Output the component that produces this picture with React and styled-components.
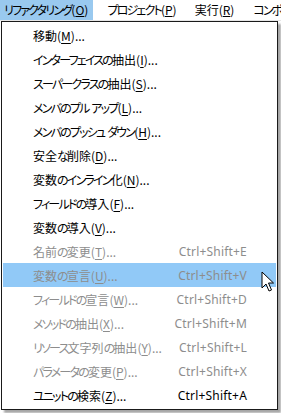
import React from "react";
import styled, { createGlobalStyle } from "styled-components";

const Global = createGlobalStyle`
  html, body { margin: 0; padding: 0; }
  body {
    width: 281px; height: 413px; overflow: hidden;
    background: #ffffff;
    font-family: "Noto Sans CJK JP", "Noto Sans", sans-serif;
  }
`;

const Screen = styled.div`
  position: relative;
  width: 281px;
  height: 413px;
  overflow: hidden;
  background: #ffffff;
`;

const MenuBar = styled.div`
  display: flex;
  height: 20px;
  overflow: hidden;
  background: #ffffff;
  font-size: 12px;
  line-height: 20px;
  color: #000;
  font-feature-settings: "palt";
`;

const BarItem = styled.div`
  flex: none;
  padding: 0 5px 0 4px;
  margin-right: ${(p) => p.$gap || 0}px;
  background: ${(p) => (p.$active ? "#99c9ef" : "transparent")};
  white-space: nowrap;
  height: 20px;
`;

const Content = styled.div`
  height: 392px;
  background: #ffffff;
  border-top: 1px solid #e6e6e6;
`;

const Menu = styled.div`
  position: absolute;
  left: 1px;
  top: 21px;
  width: 275px;
  padding: 1px 0 2px 0;
  background: #ffffff;
  border: 1px solid #1a1a1a;
  box-shadow: 3px 3px 2px rgba(0, 0, 0, 0.35);
  display: flex;
  flex-direction: column;
`;

const Row = styled.div`
  display: flex;
  align-items: center;
  justify-content: space-between;
  height: 24px;
  margin: 0 1px;
  padding: 0 29px 0 30px;
  background: ${(p) => (p.$hover ? "#91c9f7" : "transparent")};
  color: ${(p) => (p.$disabled ? "#8d8d8d" : "#000000")};
  font-size: 12px;
  white-space: nowrap;
`;

const Label = styled.span`
  font-family: "Noto Sans CJK JP", "Noto Sans", sans-serif;
  font-feature-settings: "palt";
  u { text-underline-offset: 2px; }
`;

const Kana = styled.span`
  letter-spacing: -1.8px;
`;

const Shortcut = styled.span`
  font-family: "Noto Sans", "Open Sans", sans-serif;
  font-size: 12px;
  letter-spacing: 0.2px;
`;

const Cursor = styled.svg`
  position: absolute;
  left: 261px;
  top: 271px;
`;

const kanaRe = /([\u30A0-\u30FF\u3040-\u309F]+)/;

function Jp({ text }) {
  return text
    .split(kanaRe)
    .filter(Boolean)
    .map((part, i) =>
      kanaRe.test(part) ? <Kana key={i}>{part}</Kana> : <React.Fragment key={i}>{part}</React.Fragment>
    );
}

const items = [
  ["移動", "M", "..."],
  ["インターフェイスの抽出", "I", "..."],
  ["スーパークラスの抽出", "S", "..."],
  ["メンバのプル アップ", "L", "..."],
  ["メンバのプッシュ ダウン", "H", "..."],
  ["安全な削除", "D", "..."],
  ["変数のインライン化", "N", "..."],
  ["フィールドの導入", "F", "..."],
  ["変数の導入", "V", "..."],
  ["名前の変更", "T", "...", "Ctrl+Shift+E", true],
  ["変数の宣言", "U", "...", "Ctrl+Shift+V", true, true],
  ["フィールドの宣言", "W", "...", "Ctrl+Shift+D", true],
  ["メソッドの抽出", "X", "...", "Ctrl+Shift+M", true],
  ["リソース文字列の抽出", "Y", "...", "Ctrl+Shift+L", true],
  ["パラメータの変更", "P", "...", "Ctrl+Shift+X", true],
  ["ユニットの検索", "Z", "...", "Ctrl+Shift+A"],
];

const bar = [
  ["リファクタリング", "O", 10, true],
  ["プロジェクト", "P", 9],
  ["実行", "R", 10],
  ["コンポーネント", "C", 0],
];

export default function App() {
  return (
    <Screen>
      <Global />
      <MenuBar>
        {bar.map(([name, key, gap, active]) => (
          <BarItem key={name} $active={active} $gap={gap}>
            <Jp text={name} />(<u>{key}</u>)
          </BarItem>
        ))}
      </MenuBar>
      <Content />
      <Menu>
        {items.map(([name, key, dots, sc, dis, hover]) => (
          <Row key={name} $disabled={dis} $hover={hover}>
            <Label>
              <Jp text={name} />(<u>{key}</u>){dots}
            </Label>
            {sc && <Shortcut>{sc}</Shortcut>}
          </Row>
        ))}
      </Menu>
      <Cursor width="14" height="22" viewBox="0 0 14 22">
        <path
          d="M1 1 L1 17 L5 13 L8 20 L10.5 19 L7.5 12 L12.5 12 Z"
          fill="#ffffff"
          stroke="#000000"
          strokeWidth="1"
          strokeLinejoin="miter"
        />
      </Cursor>
    </Screen>
  );
}
